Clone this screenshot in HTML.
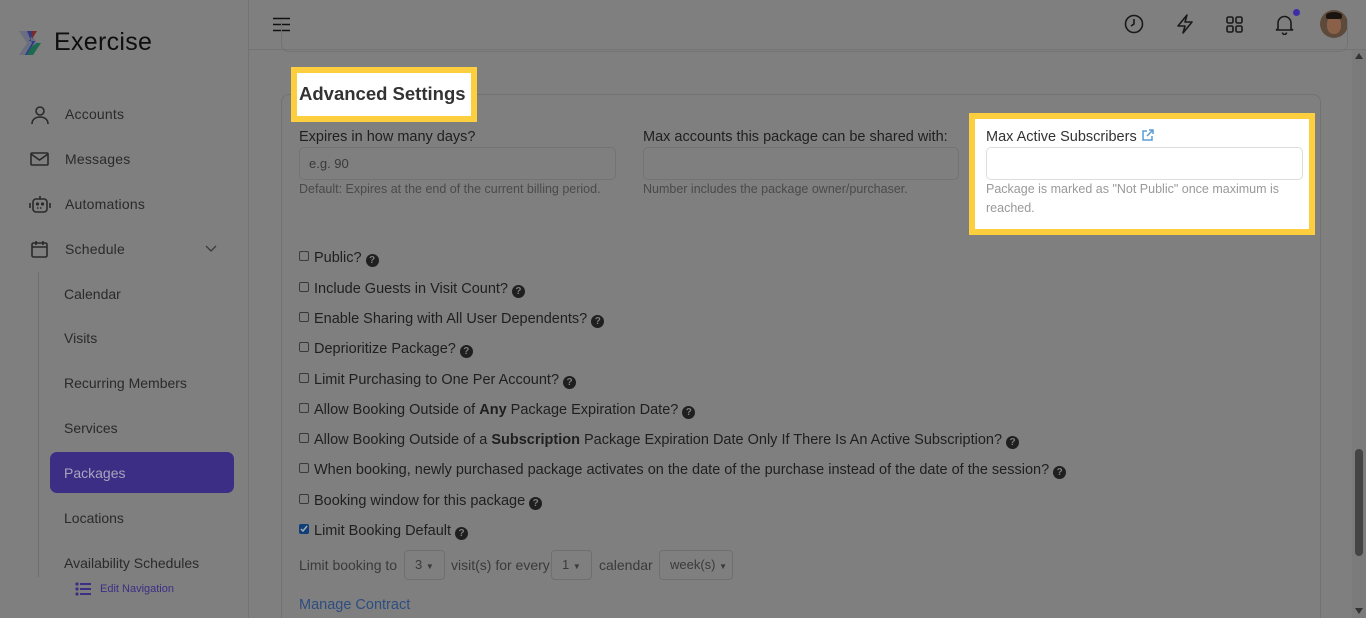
<!DOCTYPE html>
<html><head><meta charset="utf-8"><style>
*{margin:0;padding:0;box-sizing:border-box}
html,body{width:1366px;height:618px;overflow:hidden}
body{background:#7f7f7f;font-family:"Liberation Sans",sans-serif;position:relative;color:#1f1f1f}
.a{position:absolute;white-space:nowrap}
.nav{font-size:14px;color:#2a2a2a;letter-spacing:.2px}
.sub{font-size:14px;color:#2a2a2a;left:64px}
.lbl{font-size:14.5px;color:#1f1f1f}
.inp{position:absolute;height:33px;border:1px solid #737373;border-radius:5px}
.help{font-size:12.5px;color:#4a4a4a}
.cb{position:absolute;left:299px;width:10px;height:10px;border:1px solid #3a3a3a;border-radius:2px}
.ct{left:314px;font-size:14.5px;color:#1f1f1f}
.q{display:inline-block;width:13px;height:13px;border-radius:50%;background:#1f1f1f;color:#7f7f7f;font-size:10px;font-weight:bold;text-align:center;line-height:13px;vertical-align:-1px;margin-left:4px}
.sel{position:absolute;top:550px;height:30px;border:1px solid #6f6f6f;border-radius:4px;font-size:13px;color:#3a3a3a;line-height:28px;padding-left:10px}
</style></head><body>
<div class="a" style="left:248px;top:0;width:1px;height:618px;background:#737373"></div>
<div class="a" style="left:249px;top:49px;width:1117px;height:1px;background:#747474"></div>
<svg class="a" style="left:17px;top:29px" width="28" height="28" viewBox="0 0 28 28"><path d="M2 2h10l8 12-8 12H2l8-12z" fill="#6a6e80"/><path d="M10 2h8l-6 10 6 0-8 14H8l7-12z" fill="#2c3a8a"/><path d="M14 2h6l-5 8z" fill="#7a2a2a"/><path d="M14 18l6-4 4 0-8 12h-6z" fill="#1c6a50"/></svg>
<div class="a" style="left:54px;top:28px;font-size:25px;color:#0e0e0e;letter-spacing:.3px">Exercise</div>
<svg class="a" style="left:30px;top:105px" width="20" height="20" fill="none" stroke="#2a2a2a" stroke-width="1.6"><circle cx="10" cy="6" r="4"/><path d="M2 19c0-5 4-7 8-7s8 2 8 7"/></svg>
<div class="a nav" style="left:65px;top:106px">Accounts</div>
<svg class="a" style="left:30px;top:151px" width="20" height="16" fill="none" stroke="#2a2a2a" stroke-width="1.6"><rect x="1" y="2" width="17" height="12" rx="1"/><path d="M1 3l8.5 6L18 3"/></svg>
<div class="a nav" style="left:65px;top:151px">Messages</div>
<svg class="a" style="left:28px;top:193px" width="24" height="22" fill="none" stroke="#2a2a2a" stroke-width="1.6"><rect x="5" y="6" width="14" height="13" rx="3"/><path d="M12 6V3M2 10v5M22 10v5"/><circle cx="9.5" cy="11" r=".8" fill="#2a2a2a"/><circle cx="14.5" cy="11" r=".8" fill="#2a2a2a"/><path d="M9 15h6" stroke-dasharray="1.5 1.5"/></svg>
<div class="a nav" style="left:65px;top:196px">Automations</div>
<svg class="a" style="left:31px;top:240px" width="18" height="18" fill="none" stroke="#2a2a2a" stroke-width="1.6"><rect x="1" y="3" width="15" height="14" rx="1.5"/><path d="M1 7h15M5 1v4M12 1v4"/></svg>
<div class="a nav" style="left:65px;top:241px">Schedule</div>
<svg class="a" style="left:205px;top:245px" width="12" height="8" fill="none" stroke="#3a3a3a" stroke-width="1.3"><path d="M1 1l5 5 5-5"/></svg>
<div class="a" style="left:38px;top:272px;width:1px;height:305px;background:#6e6e6e"></div>
<div class="a sub" style="top:286px">Calendar</div>
<div class="a sub" style="top:330px">Visits</div>
<div class="a sub" style="top:375px">Recurring Members</div>
<div class="a sub" style="top:420px">Services</div>
<div class="a" style="left:50px;top:452px;width:184px;height:41px;background:#3d2e85;border-radius:7px"></div>
<div class="a sub" style="top:465px;color:#a9a5bc">Packages</div>
<div class="a sub" style="top:510px">Locations</div>
<div class="a sub" style="top:555px">Availability Schedules</div>
<svg class="a" style="left:75px;top:582px" width="17" height="14" fill="#3d2e85"><circle cx="2" cy="2" r="1.6"/><circle cx="2" cy="7" r="1.6"/><circle cx="2" cy="12" r="1.6"/><rect x="5" y="1" width="11" height="2"/><rect x="5" y="6" width="11" height="2"/><rect x="5" y="11" width="11" height="2"/></svg>
<div class="a" style="left:100px;top:583px;font-size:11px;color:#3d2e85">Edit Navigation</div>
<svg class="a" style="left:273px;top:17px" width="17" height="15"><path d="M0 1.5h17M0 7.5h17M0 13.5h17" stroke="#111" stroke-width="1.6"/></svg>
<svg class="a" style="left:1124px;top:14px" width="20" height="20" fill="none" stroke="#1a1a1a" stroke-width="1.6"><circle cx="10" cy="10" r="8.5"/><path d="M10 5v5l-3 2"/></svg>
<svg class="a" style="left:1176px;top:14px" width="18" height="20" fill="none" stroke="#1a1a1a" stroke-width="1.6" stroke-linejoin="round"><path d="M11 1L2 12h7l-2 7 9-11H9z"/></svg>
<svg class="a" style="left:1226px;top:16px" width="17" height="17" fill="none" stroke="#1a1a1a" stroke-width="1.6"><rect x="1" y="1" width="6" height="6" rx="1.5"/><rect x="10" y="1" width="6" height="6" rx="1.5"/><rect x="1" y="10" width="6" height="6" rx="1.5"/><rect x="10" y="10" width="6" height="6" rx="1.5"/></svg>
<svg class="a" style="left:1275px;top:14px" width="19" height="21" fill="none" stroke="#1a1a1a" stroke-width="1.6"><path d="M3 15V9a6.5 6.5 0 0113 0v6l2 1H1z"/><path d="M7.5 18.5a2 2 0 004 0"/></svg>
<div class="a" style="left:1293px;top:9px;width:7px;height:7px;border-radius:50%;background:#3d2ea8"></div>
<div class="a" style="left:1320px;top:10px;width:28px;height:28px;border-radius:50%;background:#5d4a3a;overflow:hidden"><div style="position:absolute;left:7px;top:6px;width:14px;height:18px;border-radius:45%;background:#8a6048"></div><div style="position:absolute;left:6px;top:2px;width:16px;height:7px;border-radius:50% 50% 20% 20%;background:#1a1410"></div></div>
<div class="a" style="left:1352px;top:50px;width:14px;height:568px;background:#7b7b7b"></div>
<svg class="a" style="left:1355px;top:53px" width="8" height="6"><path d="M0 6L4 0l4 6z" fill="#333"/></svg>
<svg class="a" style="left:1355px;top:608px" width="8" height="6"><path d="M0 0l4 6 4-6z" fill="#333"/></svg>
<div class="a" style="left:1355px;top:449px;width:8px;height:107px;background:#444;border-radius:4px"></div>
<div class="a" style="left:281px;top:20px;width:1067px;height:32px;border:1px solid #727272;border-top:none;border-radius:0 0 8px 8px"></div>
<div class="a" style="left:281px;top:94px;width:1040px;height:524px;border:1px solid #727272;border-bottom:none;border-radius:8px 8px 0 0"></div>
<div class="a" style="left:291px;top:67px;width:186px;height:55px;background:#fdcf3e"></div>
<div class="a" style="left:297px;top:73px;width:174px;height:43px;background:#fff"></div>
<div class="a" style="left:299px;top:83px;font-size:18.5px;font-weight:bold;color:#333">Advanced Settings</div>
<div class="a lbl" style="left:299px;top:129px">Expires in how many days?</div>
<div class="inp" style="left:299px;top:147px;width:317px"></div>
<div class="a" style="left:309px;top:156px;font-size:13px;color:#3a3a3a">e.g. 90</div>
<div class="a help" style="left:299px;top:182px">Default: Expires at the end of the current billing period.</div>
<div class="a lbl" style="left:643px;top:129px">Max accounts this package can be shared with:</div>
<div class="inp" style="left:643px;top:147px;width:316px"></div>
<div class="a help" style="left:643px;top:182px">Number includes the package owner/purchaser.</div>
<div class="a" style="left:969px;top:113px;width:346px;height:122px;background:#fdcf3e"></div>
<div class="a" style="left:975px;top:119px;width:334px;height:110px;background:#fff"></div>
<div class="a lbl" style="left:986px;top:129px;color:#333">Max Active Subscribers <svg width="13" height="13" fill="none" stroke="#5b9bd5" stroke-width="1.5" style="vertical-align:-1px"><path d="M6 2H2v9h9V7M8 1h4v4M12 1L6 7"/></svg></div>
<div class="a" style="left:986px;top:147px;width:317px;height:33px;border:1px solid #ddd;border-radius:5px"></div>
<div class="a" style="left:986px;top:180px;font-size:12.5px;color:#999;line-height:19px;white-space:normal;width:310px">Package is marked as "Not Public" once maximum is reached.</div>
<div class="cb" style="top:251px"></div><div class="a ct" style="top:250px">Public?<span class="q">?</span></div>
<div class="cb" style="top:282px"></div><div class="a ct" style="top:281px">Include Guests in Visit Count?<span class="q">?</span></div>
<div class="cb" style="top:312px"></div><div class="a ct" style="top:311px">Enable Sharing with All User Dependents?<span class="q">?</span></div>
<div class="cb" style="top:342px"></div><div class="a ct" style="top:341px">Deprioritize Package?<span class="q">?</span></div>
<div class="cb" style="top:373px"></div><div class="a ct" style="top:372px">Limit Purchasing to One Per Account?<span class="q">?</span></div>
<div class="cb" style="top:403px"></div><div class="a ct" style="top:402px">Allow Booking Outside of <b>Any</b> Package Expiration Date?<span class="q">?</span></div>
<div class="cb" style="top:433px"></div><div class="a ct" style="top:432px">Allow Booking Outside of a <b>Subscription</b> Package Expiration Date Only If There Is An Active Subscription?<span class="q">?</span></div>
<div class="cb" style="top:463px"></div><div class="a ct" style="top:462px">When booking, newly purchased package activates on the date of the purchase instead of the date of the session?<span class="q">?</span></div>
<div class="cb" style="top:494px"></div><div class="a ct" style="top:493px">Booking window for this package<span class="q">?</span></div>
<div class="cb" style="top:524px;background:#0f3f7a;border-color:#0f3f7a"><svg width="8" height="8" style="position:absolute;left:0;top:0" fill="none" stroke="#aaa" stroke-width="1.5"><path d="M1 4l2 2 4-5"/></svg></div><div class="a ct" style="top:523px">Limit Booking Default<span class="q">?</span></div>
<div class="a" style="left:299px;top:557px;font-size:14px;color:#3a3a3a">Limit booking to</div>
<div class="sel" style="left:404px;width:41px">3 <span style="font-size:8px">▼</span></div>
<div class="a" style="left:451px;top:557px;font-size:14px;color:#3a3a3a">visit(s) for every</div>
<div class="sel" style="left:551px;width:41px">1 <span style="font-size:8px">▼</span></div>
<div class="a" style="left:599px;top:557px;font-size:14px;color:#3a3a3a">calendar</div>
<div class="sel" style="left:659px;width:74px">week(s) <span style="font-size:8px">▼</span></div>
<div class="a" style="left:299px;top:597px;font-size:14.5px;color:#2e4d80">Manage Contract</div>
</body></html>
